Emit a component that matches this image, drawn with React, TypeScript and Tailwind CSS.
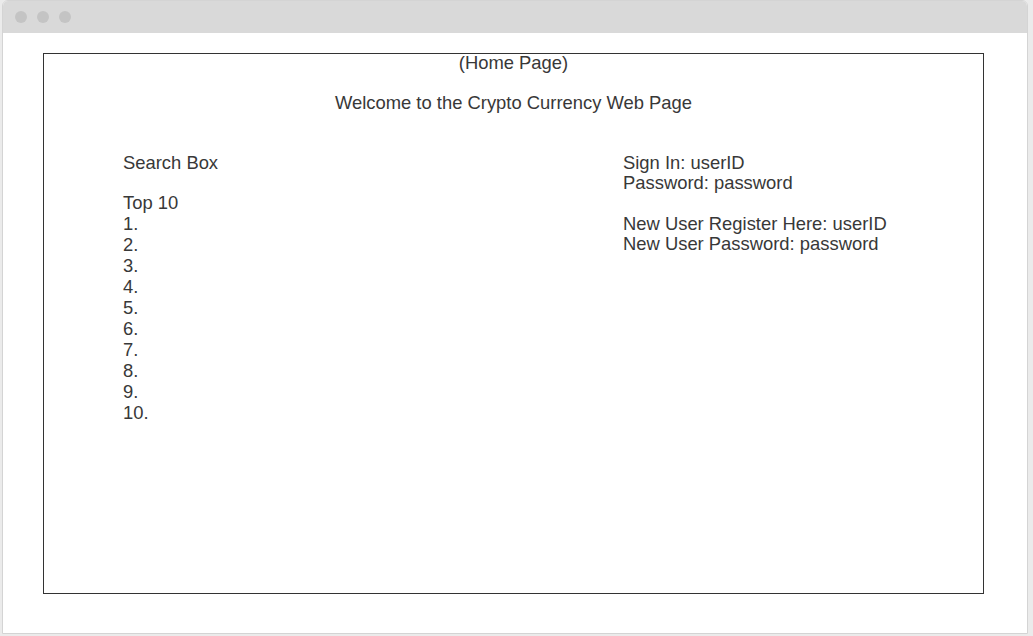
export default function App() {
  const top10 = ['1.', '2.', '3.', '4.', '5.', '6.', '7.', '8.', '9.', '10.'];

  return (
    <div
      className="w-[1033px] h-[636px] bg-[#ebebeb] overflow-hidden"
      style={{ fontFamily: '"Liberation Sans", Arial, sans-serif' }}
    >
      {/* Browser window */}
      <div className="ml-[2px] w-[1026px] h-[634px] bg-white border border-[#d4d4d4] rounded-t-[6px] overflow-hidden">
        {/* Title bar */}
        <div className="h-[32px] bg-[#d9d9d9] flex items-center gap-[10px] pl-[12px]">
          <span className="w-[12px] h-[12px] rounded-full bg-[#c4c4c4]" />
          <span className="w-[12px] h-[12px] rounded-full bg-[#c4c4c4]" />
          <span className="w-[12px] h-[12px] rounded-full bg-[#c4c4c4]" />
        </div>

        {/* Page frame */}
        <div className="ml-[40px] mt-[20px] w-[941px] h-[541px] border border-[#333333] text-[18.4px] text-[#383838]">
          <p className="text-center leading-[18px]">(Home Page)</p>
          <p className="text-center leading-[21px] mt-[20px]">Welcome to the Crypto Currency Web Page</p>

          <div className="flex mt-[39px] pl-[79px]">
            {/* Left column */}
            <div className="w-[500px] leading-[21px]">
              <p>Search Box</p>
              <p className="mt-[19px]">Top 10</p>
              {top10.map((n) => (
                <p key={n}>{n}</p>
              ))}
            </div>

            {/* Right column */}
            <div className="leading-[20px] pt-[1px]">
              <p>Sign In: userID</p>
              <p>Password: password</p>
              <p className="mt-[21px]">New User Register Here: userID</p>
              <p>New User Password: password</p>
            </div>
          </div>
        </div>
      </div>
    </div>
  );
}
